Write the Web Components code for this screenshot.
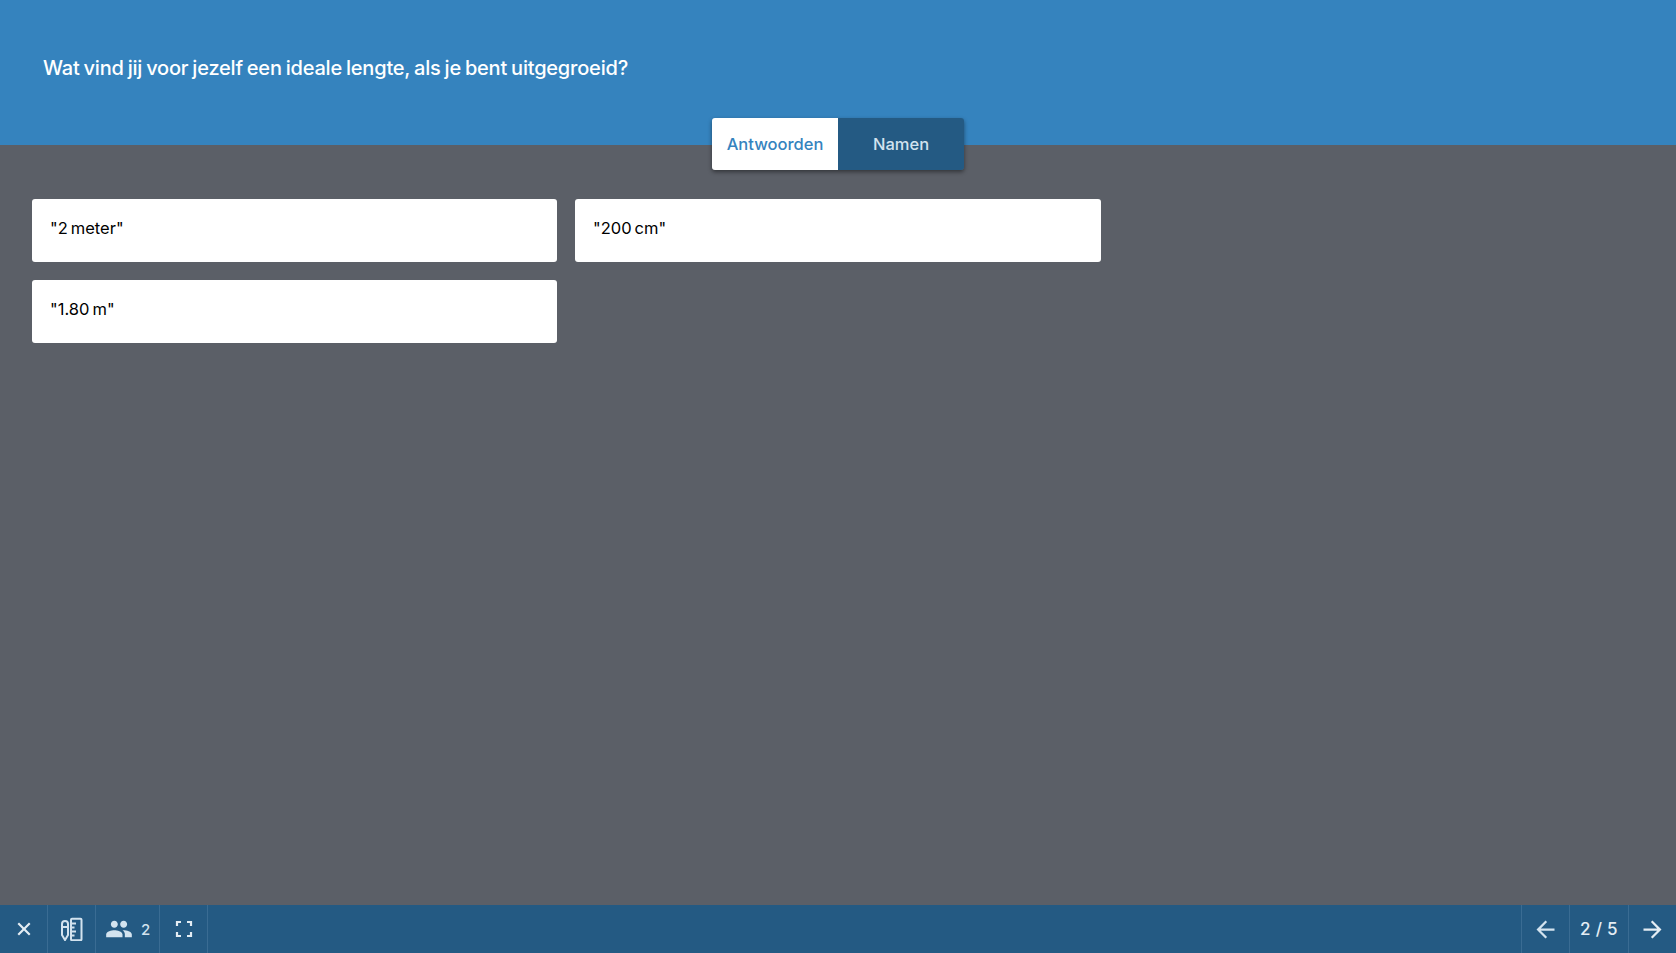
<!DOCTYPE html>
<html><head><meta charset="utf-8">
<style>
html,body{margin:0;height:100%}
body{font-family:Inter,"Liberation Sans",sans-serif;background:#5b5f67}
</style></head>
<body>
<poll-app>
  <question-header slot="header">Wat vind jij voor jezelf een ideale lengte, als je bent uitgegroeid?</question-header>
  <answer-list slot="main">
    <answer-card>"2 meter"</answer-card>
    <answer-card>"200 cm"</answer-card>
    <answer-card>"1.80 m"</answer-card>
  </answer-list>
  <control-bar slot="footer"></control-bar>
</poll-app>
<script>
function def(name, html){
  customElements.define(name, class extends HTMLElement{
    constructor(){super();this.attachShadow({mode:'open'}).innerHTML=html;}
  });
}
def('poll-app',`<style>
:host{display:flex;flex-direction:column;height:953px;overflow:hidden}
.main{flex:1;min-height:0}
</style><slot name="header"></slot><div class="main"><slot name="main"></slot></div><slot name="footer"></slot>`);
def('question-header',`<style>
:host{display:block;position:relative;height:145px;background:#3583be;color:#fff;box-sizing:border-box;padding:55px 0 0 43px;font-size:20px;line-height:26px;font-weight:500;letter-spacing:-.2px;word-spacing:-1.15px}
view-toggle{position:absolute;left:712px;top:118px}
</style><slot></slot><view-toggle></view-toggle>`);
def('view-toggle',`<style>
:host{display:flex;width:252px;height:52px;border-radius:3px;box-shadow:0 2px 4px rgba(0,0,0,.45);overflow:hidden;font-size:16.5px;letter-spacing:0;word-spacing:0}
div{display:flex;align-items:center;justify-content:center}
.a{width:126px;background:#fff;color:#3583be}
.b{width:126px;background:#245a83;color:#d3e3ef}
</style><div class="a">Antwoorden</div><div class="b">Namen</div>`);
def('answer-list',`<style>
:host{display:grid;grid-template-columns:525px 526px;column-gap:18px;row-gap:18px;padding:54px 0 0 32px}
</style><slot></slot>`);
def('answer-card',`<style>
:host{display:block;height:63px;box-sizing:border-box;background:#fff;border-radius:3px;padding:19px 18px;color:#000;font-size:16.5px;line-height:20px;font-weight:400;letter-spacing:0;word-spacing:-1.6px}
</style><slot></slot>`);
def('control-bar',`<style>
:host{display:flex;justify-content:space-between;height:48px;background:#245a83;color:#d3e3ef;font-size:15px}
.g{display:flex}
.c{display:flex;align-items:center;justify-content:center;box-sizing:border-box;border-right:1px solid #3a6c93;height:100%}
.r .c{border-right:0;border-left:1px solid #3a6c93}
svg{display:block}
</style>
<div class="g">
 <div class="c" style="width:48px"><svg width="26" height="26" viewBox="0 0 24 24" fill="#e4edf4"><path d="M18 7.4 16.6 6 12 10.6 7.4 6 6 7.4 10.6 12 6 16.6 7.4 18 12 13.4 16.6 18 18 16.6 13.4 12z"/></svg></div>
 <div class="c" style="width:48px"><svg width="24" height="24" viewBox="0 0 24 24" fill="none" stroke="#d3e3ef" stroke-width="2"><path d="M2 7a3 3 0 0 1 6 0v11l-3 5-3-5z"/><path d="M2 10h6"/><rect x="11" y="1.8" width="10.5" height="21.5" rx="1"/><path d="M11 6.5h5M11 10.5h3.5M11 14.5h5M11 18.5h3.5"/></svg></div>
 <div class="c" style="width:64px;gap:8px"><svg width="28" height="28" viewBox="0 0 24 24" fill="#d3e3ef"><path d="M16 11c1.66 0 2.99-1.34 2.99-3S17.66 5 16 5s-3 1.34-3 3 1.34 3 3 3zm-8 0c1.66 0 2.99-1.34 2.99-3S9.66 5 8 5 5 6.34 5 8s1.34 3 3 3zm0 2c-2.33 0-7 1.17-7 3.5V19h14v-2.5C15 14.17 10.33 13 8 13zm8 0c-.29 0-.62.02-.97.05 1.16.84 1.97 1.97 1.97 3.45V19h6v-2.5c0-2.33-4.67-3.5-7-3.5z"/></svg><span style="font-size:15px;font-weight:500">2</span></div>
 <div class="c" style="width:48px"><svg width="24" height="24" viewBox="0 0 24 24" fill="none" stroke="#e4edf4" stroke-width="2.2"><path d="M5 9V5h4M15 5h4v4M19 15v4h-4M9 19H5v-4"/></svg></div>
</div>
<div class="g r">
 <div class="c" style="width:48px"><svg width="27" height="27" viewBox="0 0 24 24" fill="#d3e3ef"><path d="M20 11H7.83l5.59-5.59L12 4l-8 8 8 8 1.41-1.41L7.83 13H20z"/></svg></div>
 <div class="c" style="width:59px;font-size:17px;font-weight:500;letter-spacing:.3px;color:#e4edf4">2 / 5</div>
 <div class="c" style="width:48px"><svg width="27" height="27" viewBox="0 0 24 24" fill="#e4edf4"><path d="M4 11h12.17l-5.59-5.59L12 4l8 8-8 8-1.41-1.41L16.17 13H4z"/></svg></div>
</div>`);
</script>
</body></html>
